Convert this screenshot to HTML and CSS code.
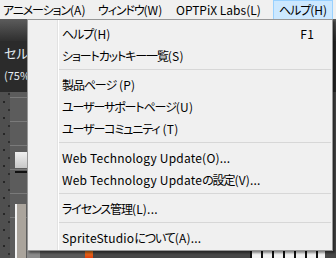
FILE: index.html
```html
<!DOCTYPE html>
<html>
	<head>
		<meta charset="utf-8">
		<title>ヘルプ メニュー</title>
		<link rel="stylesheet" href="styles.css">
	</head>
	<body>
		<div class="screen">
			<div class="menubar">
				<span class="menubar-item"><span class="ja">アニメーション</span>(A)</span>
				<span class="menubar-item"><span class="ja">ウィンドウ</span>(W)</span>
				<span class="menubar-item">OPTPiX Labs(L)</span>
				<span class="menubar-item active"><span class="ja">ヘルプ</span>(H)</span>
			</div>
			<div class="workspace">
				<div class="head"></div>
				<div class="label">
					<span class="label-big">セル</span>
					<span class="label-small">(75%)</span>
				</div>
				<div class="body">
					<div class="dots"></div>
					<div class="panel">
						<div class="panel-btn"></div>
						<div class="panel-bar"></div>
						<div class="panel-shape"></div>
					</div>
					<div class="canvas">
						<div class="canvas-row">
							<div class="seg seg-a"></div>
							<div class="seg seg-b"></div>
							<div class="seg seg-fire"></div>
							<div class="seg seg-c"></div>
							<div class="seg seg-ruler"></div>
							<div class="seg seg-d"></div>
						</div>
					</div>
				</div>
			</div>
			<ul class="dropdown">
				<li class="item"><span><span class="ja">ヘルプ</span>(H)</span><span class="key">F1</span></li>
				<li class="item"><span><span class="ja">ショートカットキー一覧</span>(S)</span></li>
				<li class="sep"></li>
				<li class="item"><span><span class="ja">製品ページ</span> (P)</span></li>
				<li class="item"><span><span class="ja">ユーザーサポートページ</span>(U)</span></li>
				<li class="item"><span><span class="ja">ユーザーコミュニティ</span> (T)</span></li>
				<li class="sep"></li>
				<li class="item"><span>Web Technology Update(O)...</span></li>
				<li class="item"><span>Web Technology Update<span class="ja">の設定</span>(V)...</span></li>
				<li class="sep"></li>
				<li class="item"><span><span class="ja">ライセンス管理</span>(L)...</span></li>
				<li class="sep"></li>
				<li class="item"><span>SpriteStudio<span class="ja">について</span>(A)...</span></li>
			</ul>
		</div>
	</body>
</html>
```

FILE: styles.css
```css
html, body{
	margin: 0;
	padding: 0;
	width: 336px;
	height: 258px;
	overflow: hidden;
}
body{
	font-family: "Noto Sans CJK JP", "Noto Sans", sans-serif;
	font-size: 12px;
	font-feature-settings: "palt";
	color: #000;
	background: #4b4b4b;
}
.ja{
	letter-spacing: -1.1px;
}
.screen{
	position: relative;
	width: 336px;
	height: 258px;
	display: flex;
	flex-direction: column;
}
.menubar{
	height: 19px;
	display: flex;
	align-items: stretch;
	background: #f0f0f0;
	flex: none;
}
.menubar-item{
	box-sizing: border-box;
	display: flex;
	align-items: center;
	padding: 0 0 0 2px;
	line-height: 18px;
	white-space: nowrap;
	border: 1px solid transparent;
	border-bottom: none;
}
.menubar-item:first-child{
	width: 95px;
}
.menubar-item:nth-child(2){
	width: 78px;
}
.menubar-item:nth-child(3){
	width: 100px;
}
.menubar-item.active{
	width: 60px;
	padding-left: 5px;
	background: #cce8ff;
	border-color: #99d1ff;
}
.workspace{
	flex: 1;
	display: flex;
	flex-direction: column;
}
.head{
	height: 22px;
	background: linear-gradient(#5c5c5c, #2f2f2f);
}
.label{
	height: 51px;
	background: #2b2b2b;
	display: flex;
	flex-direction: column;
	padding-left: 4px;
	color: #e4ecf2;
}
.label-big{
	font-size: 13px;
	line-height: 16px;
	margin-top: 4px;
}
.label-small{
	font-size: 11px;
	line-height: 14px;
	margin-top: 7px;
}
.body{
	flex: 1;
	display: flex;
}
.dots{
	width: 10px;
	background-color: #4f4f4f;
	background-image: radial-gradient(circle, #262626 1px, transparent 1.5px), radial-gradient(circle, #2e2e2e 0.8px, transparent 1.2px);
	background-size: 10px 16px, 10px 16px;
	background-position: -1px 2px, 4px 10px;
}
.panel{
	width: 17px;
	background-color: #5c5c5c;
	background-image: repeating-linear-gradient(to bottom, transparent 0, transparent 23px, #7a7a7a 23px, #7a7a7a 24px);
	background-position: 0 -18px;
	display: flex;
	flex-direction: column;
	align-items: flex-end;
}
.panel-btn{
	margin-top: 60px;
	width: 12px;
	height: 16px;
	background: linear-gradient(#f0f0f0, #c8c8c8);
}
.panel-bar{
	margin-top: 3px;
	width: 12px;
	height: 2px;
	background: #111;
}
.panel-shape{
	margin-top: 31px;
	margin-right: 1px;
	width: 9px;
	flex: 1;
	background: #aaa49c;
	border-left: 2px solid #f4f4f4;
}
.canvas{
	flex: 1;
	display: flex;
	flex-direction: column;
	justify-content: flex-end;
	background: #4b4b4b;
}
.canvas-row{
	height: 8px;
	display: flex;
}
.seg-a{
	width: 13px;
	background: #8a8a8a;
}
.seg-b{
	width: 45px;
	background: #5a5a5a;
}
.seg-fire{
	width: 8px;
	background: linear-gradient(#f08a20, #e04010);
}
.seg-c{
	width: 157px;
	background: #474747;
}
.seg-ruler{
	width: 75px;
	background-color: #f2f2f2;
	background-image: repeating-linear-gradient(to right, #111 0, #111 2px, transparent 2px, transparent 11px);
}
.seg-d{
	flex: 1;
	background: #474747;
}
.dropdown{
	position: absolute;
	left: 27px;
	top: 19px;
	width: 304px;
	margin: 0;
	padding: 2px 0;
	list-style: none;
	background-color: #f0f0f0;
	background-image: linear-gradient(to right, transparent 29px, #e2e2e2 29px, #e2e2e2 30px, #fff 30px, #fff 31px, transparent 31px);
	border: 1px solid #979797;
	box-shadow: 2px 2px 2px rgba(0, 0, 0, 0.45);
}
.item{
	height: 22px;
	display: flex;
	align-items: center;
	justify-content: space-between;
	padding: 0 18px 0 34px;
	white-space: nowrap;
	letter-spacing: 0.2px;
}
.item .ja{
	letter-spacing: -1.1px;
}
.sep{
	height: 7px;
	margin: 0 1px 0 31px;
	display: flex;
	align-items: center;
}
.sep::before{
	content: "";
	flex: 1;
	height: 1px;
	background: #d7d7d7;
}
```
